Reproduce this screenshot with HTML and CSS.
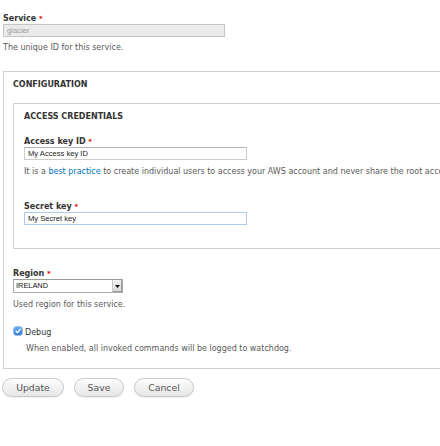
FILE: index.html
```html
<!DOCTYPE html>
<html>
<head>
<meta charset="utf-8">
<link rel="stylesheet" href="styles.css">
</head>
<body>
<div class="page">
  <div class="item item-service">
    <label class="label">Service <span class="req">*</span></label>
    <input class="text disabled" type="text" value="glacier" disabled>
    <div class="desc">The unique ID for this service.</div>
  </div>

  <div class="fieldset outer">
    <div class="legend">CONFIGURATION</div>
    <div class="fieldset inner">
      <div class="legend">ACCESS CREDENTIALS</div>
      <div class="item item-access">
        <label class="label">Access key ID <span class="req">*</span></label>
        <input class="text wide" type="text" value="My Access key ID">
        <div class="desc nowrap">It is a <a href="#" class="link">best practice</a> to create individual users to access your AWS account and never share the root account credentials.</div>
      </div>
      <div class="item item-secret">
        <label class="label">Secret key <span class="req">*</span></label>
        <input class="text wide focus" type="text" value="My Secret key">
      </div>
    </div>

    <div class="item item-region">
      <label class="label">Region <span class="req">*</span></label>
      <div class="select">
        <span class="select-value">IRELAND</span>
        <span class="select-arrow"><svg width="5" height="3" viewBox="0 0 5 3"><path d="M0 0h5L2.5 3z" fill="#111"/></svg></span>
      </div>
      <div class="desc">Used region for this service.</div>
    </div>

    <div class="item item-debug">
      <div class="check-row">
        <span class="checkbox"><svg width="8" height="8" viewBox="0 0 8 8"><path d="M2 4.2l1.5 1.6L6.2 2.2" fill="none" stroke="#fff" stroke-width="1.3" stroke-linecap="round" stroke-linejoin="round"/></svg></span>
        <span class="check-label">Debug</span>
      </div>
      <div class="desc check-desc">When enabled, all invoked commands will be logged to watchdog.</div>
    </div>
  </div>

  <div class="actions">
    <button class="btn btn-update">Update</button>
    <button class="btn btn-save">Save</button>
    <button class="btn btn-cancel">Cancel</button>
  </div>
</div>
</body>
</html>
```

FILE: styles.css
```css
html, body {
  margin: 0;
  padding: 0;
  background: #fff;
  overflow: hidden;
}

body {
  width: 440px;
  height: 446px;
  font-family: "DejaVu Sans", Verdana, sans-serif;
  font-size: 8px;
  line-height: 10px;
  color: #333;
}

.page {
  width: 720px;
  padding-left: 3px;
  padding-top: 14px;
}

.label {
  display: block;
  font-weight: bold;
  color: #333;
  line-height: 10px;
  margin-bottom: 0;
}

.req {
  color: #e00;
  font-weight: bold;
  font-size: 7px;
}

.text {
  display: block;
  box-sizing: border-box;
  height: 13px;
  margin: 0;
  padding: 0 3px;
  border: 1px solid #ccc;
  border-top-color: #b4b4b4;
  font-family: "Liberation Sans", Arial, sans-serif;
  font-size: 7.6px;
  color: #222;
  background: #fff;
  outline: none;
}

.text.disabled {
  width: 222px;
  background: #ebebeb;
  color: #9a9a9a;
  border-color: #c4c4c4;
}

.text.wide {
  width: 223px;
}

.text.focus {
  border-color: #aeccef;
}

.desc {
  margin-top: 6px;
  color: #595959;
  line-height: 10px;
}

.item-access .desc {
  margin-top: 7px;
}

.item-region .desc {
  margin-top: 7px;
}

.nowrap {
  white-space: nowrap;
}

.link {
  color: #0074bd;
  text-decoration: none;
}

.fieldset {
  border: 1px solid #d0d0d0;
  border-right: none;
}

.outer {
  margin-top: 18px;
  padding: 8px 0 14px 9px;
}

.inner {
  margin-top: 13px;
  padding: 8px 0 23px 10px;
}

.legend {
  font-weight: bold;
  color: #333;
  line-height: 10px;
}

.item-access {
  margin-top: 15px;
}

.item-secret {
  margin-top: 25px;
}

.item-region {
  margin-top: 20px;
}

.select {
  box-sizing: border-box;
  width: 110px;
  height: 14px;
  display: flex;
  align-items: stretch;
  border: 1px solid #a9a9a9;
  border-top-color: #9a9a9a;
  background: #fff;
}

.select-value {
  flex: 1;
  padding-left: 2px;
  font-family: "Liberation Sans", Arial, sans-serif;
  font-size: 7.4px;
  line-height: 12px;
  color: #111;
}

.select-arrow {
  width: 9px;
  display: flex;
  align-items: center;
  justify-content: center;
  background: linear-gradient(#f4f4f4, #d6d6d6);
  border-left: 1px solid #c8c8c8;
  box-shadow: inset -1px -1px 0 #9c9c9c;
}

.item-debug {
  margin-top: 18px;
}

.check-row {
  display: flex;
  align-items: flex-start;
  gap: 3px;
  padding-left: 1px;
  height: 10px;
}

.checkbox {
  width: 8px;
  height: 8px;
  margin-top: -1px;
  border-radius: 2px;
  background: linear-gradient(#6aaef6, #2e7ad9);
  display: flex;
  box-shadow: 0 0 0 0.5px #3c78c8;
}

.check-label {
  color: #333;
}

.check-desc {
  margin-top: 6px;
  padding-left: 13px;
}

.actions {
  display: flex;
  gap: 10px;
  margin-top: 9px;
  margin-left: -1px;
}

.btn {
  box-sizing: border-box;
  height: 19px;
  padding: 0;
  border: 1px solid #c9c9c9;
  border-radius: 10px;
  background: linear-gradient(#fdfdfd, #e6e6e6);
  font-family: "DejaVu Sans", Verdana, sans-serif;
  font-size: 9.3px;
  color: #555;
  box-shadow: 0 1px 1px rgba(0,0,0,0.06);
}

.btn-update { width: 62px; }
.btn-save { width: 50px; }
.btn-cancel { width: 60px; }
```
